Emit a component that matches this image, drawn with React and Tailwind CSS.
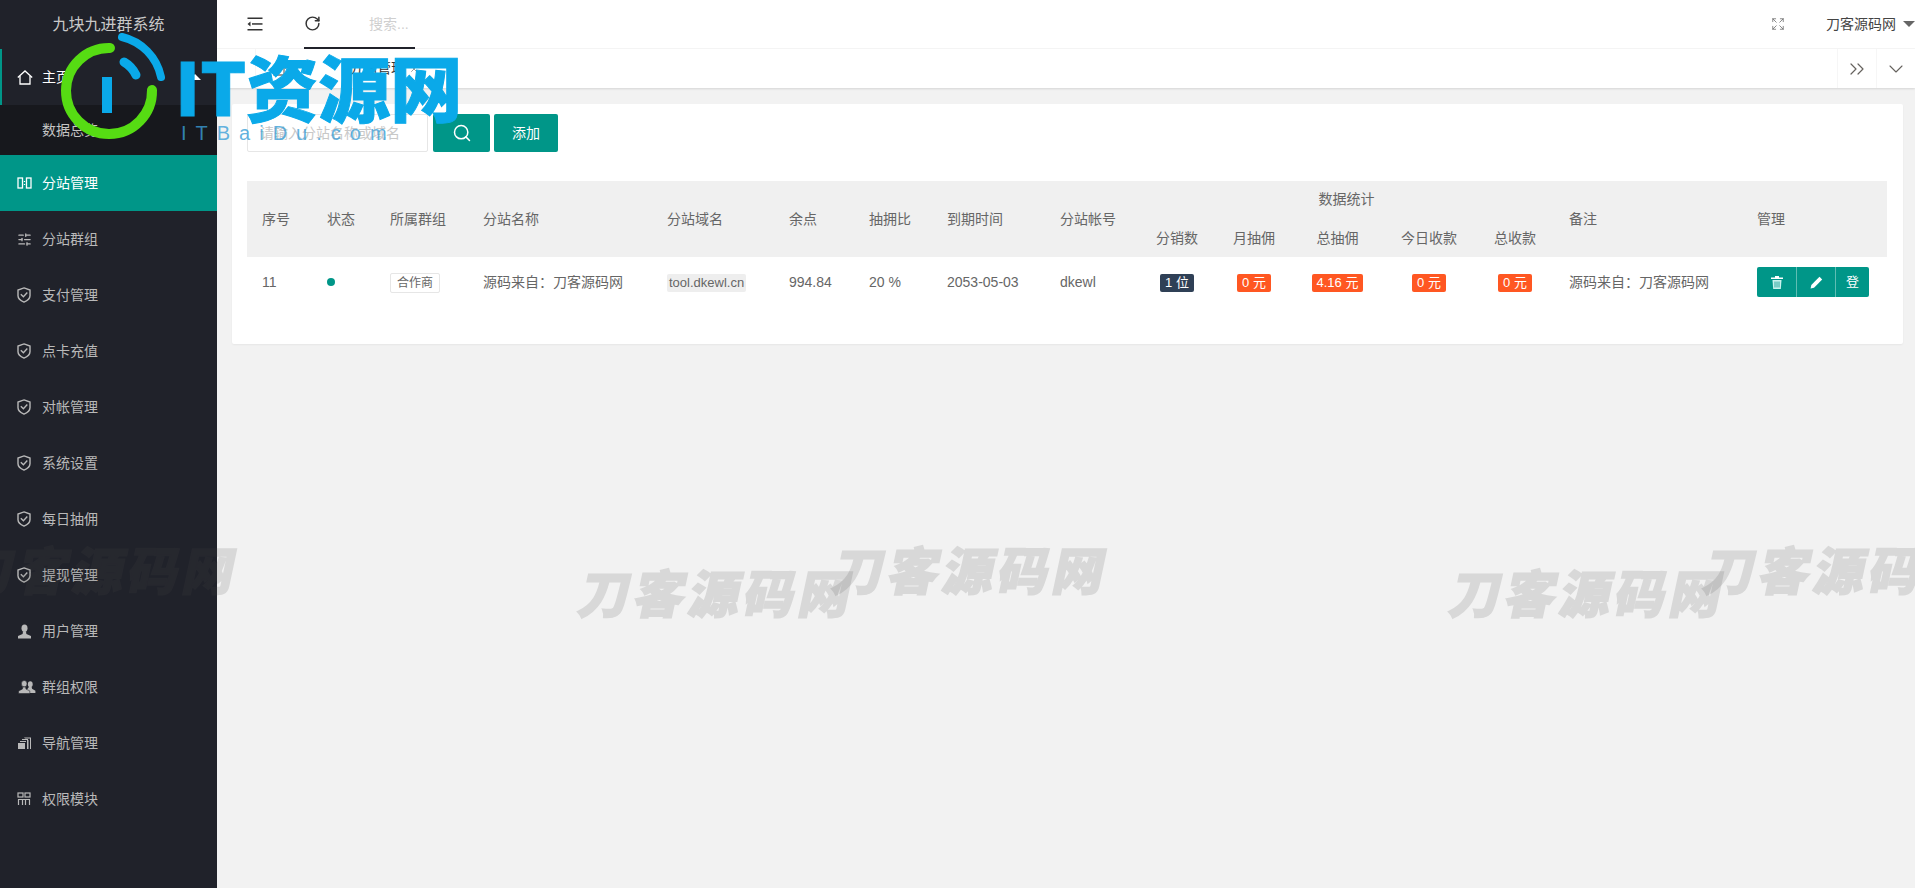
import React from "react";
import { SlidersHorizontal, RotateCw, Expand, ChevronsRight, ChevronsLeft, ChevronDown, Search, X } from "lucide-react";

const HomeIcon = ({ className = "" }) => (
  <svg className={`shrink-0 ${className}`} width="16" height="15" viewBox="0 0 16 15" fill="none" stroke="currentColor" strokeWidth="1.3">
    <path d="M0.800 7.500 8 1l7.200 6.500" />
    <path d="M3 6v8h10V6" />
  </svg>
);
const ShieldIcon = () => (
  <svg className="shrink-0" width="14" height="16" viewBox="0 0 14 16" fill="none" stroke="currentColor" strokeWidth="1.4">
    <path d="M7 0.900 13 3v5.800c0 3.200-2.800 5-6 6.300-3.200-1.300-6-3.100-6-6.300V3z" />
    <path d="M3.800 7.200 6.400 9.800 10.300 5.600" />
  </svg>
);
const ColumnsIcon = () => (
  <svg className="shrink-0" width="15" height="14" viewBox="0 0 15 14" fill="none" stroke="currentColor" strokeWidth="1.3">
    <rect x="1" y="2" width="4.500" height="10" />
    <rect x="9.500" y="2" width="4.500" height="10" />
    <path d="M7.500 5v1M7.500 8v1" />
  </svg>
);
const UserIcon = () => (
  <svg className="shrink-0" width="15" height="15" viewBox="0 0 15 15" fill="currentColor">
    <ellipse cx="7.500" cy="4.200" rx="3" ry="3.700" />
    <path d="M6 7.500h3l.4 2.400 4.600 2V14.500H1v-2.600l4.600-2z" />
  </svg>
);
const UsersIcon = () => (
  <svg className="ml-[1px] shrink-0" width="18" height="14" viewBox="0 0 19 15" fill="currentColor">
    <ellipse cx="13" cy="4.500" rx="2.600" ry="3.200" />
    <path d="M11.500 7.500h3l.4 2 3.600 2V14H9v-3z" />
    <ellipse cx="6.500" cy="4" rx="3" ry="3.500" stroke="#20222a" strokeWidth="0.600" />
    <path d="M5 7.500h3l.4 2.200 4.100 2V14.500H0.500v-2.800l4.100-2z" stroke="#20222a" strokeWidth="0.600" />
  </svg>
);
const NavIcon = () => (
  <svg className="shrink-0" width="15" height="14" viewBox="0 0 15 14" fill="currentColor">
    <path d="M1 7h7v6H1zM3 5h6v1H3zM5 3h6v1H5zM7 1.500h7V13h-1V2.500H8z" />
    <path d="M10 4h1.500v9H10z" />
  </svg>
);
const GridIcon = () => (
  <svg className="shrink-0" width="14" height="14" viewBox="0 0 14 14" fill="none" stroke="currentColor" strokeWidth="1.200">
    <rect x="1" y="1" width="5" height="4" />
    <rect x="8" y="1" width="5" height="4" />
    <path d="M1.500 7.500V13M5.500 7.500V13M8.500 7.500V13M12.500 7.500V13M1 7.500h12" />
  </svg>
);
const MenuFold = () => (
  <svg width="16" height="14" viewBox="0 0 16 14" fill="#333">
    <rect x="0.500" y="0.500" width="15" height="1.500" />
    <rect x="5" y="6.200" width="10.500" height="1.500" />
    <rect x="0.500" y="12" width="15" height="1.500" />
    <path d="M3.500 4.500v5L0.500 7z" />
  </svg>
);
const TrashIcon = () => (
  <svg width="14" height="15" viewBox="0 0 14 15" fill="none">
    <path d="M1 2.500h12v1.500H1zM5 1h4v1.500H5z" fill="#fff" />
    <path d="M2.500 5h9l-.7 9H3.200z" fill="#c9f2ee" />
    <path d="M5 6.500v6M7 6.500v6M9 6.500v6" stroke="#009688" strokeWidth="0.800" />
  </svg>
);
const PenIcon = () => (
  <svg width="13" height="13" viewBox="0 0 13 13" fill="#fff">
    <path d="M9.500 0.800l2.700 2.700L4 11.700.6 12.400l.7-3.400z" />
  </svg>
);

const menu = [
  ["分站群组", <SlidersHorizontal size={15} strokeWidth={2} className="shrink-0" />],
  ["支付管理", <ShieldIcon />],
  ["点卡充值", <ShieldIcon />],
  ["对帐管理", <ShieldIcon />],
  ["系统设置", <ShieldIcon />],
  ["每日抽佣", <ShieldIcon />],
  ["提现管理", <ShieldIcon />],
  ["用户管理", <UserIcon />],
  ["群组权限", <UsersIcon />],
  ["导航管理", <NavIcon />],
  ["权限模块", <GridIcon />],
];

const marks = [
  "left-[-35px] top-[532px]",
  "left-[581px] top-[555px]",
  "left-[835px] top-[532px]",
  "left-[1452px] top-[555px]",
  "left-[1706px] top-[532px]",
];

const Th = ({ children, className = "" }) => (
  <th rowSpan={2} className={`px-[15px] text-left font-normal align-middle ${className}`}>{children}</th>
);
const Badge = ({ children, dark }) => (
  <span className={`inline-block h-[18px] rounded-[2px] px-[5px] text-[13px] leading-[18px] text-white ${dark ? "bg-[#2f4056]" : "bg-[#ff5722]"}`}>
    {children}
  </span>
);

export default function App() {
  return (
    <div className="relative flex h-[888px] w-[1915px] overflow-hidden bg-[#f2f2f2] font-['Liberation_Sans','Noto_Sans_CJK_SC',sans-serif] text-[14px] text-[#666]">
      <aside className="flex w-[217px] shrink-0 flex-col bg-[#20222a] text-[#b9b9b9]">
        <div className="flex h-[49px] items-center justify-center text-[16px] text-[#c8c8c8]">九块九进群系统</div>
        <div className="flex h-[56px] items-center border-l-2 border-[#009688] pl-[15px] text-white">
          <HomeIcon className="mr-[9px]" />
          <span>主页</span>
          <span className="ml-auto mr-[16px] h-0 w-0 border-x-[6px] border-b-[6px] border-x-transparent border-b-white" />
        </div>
        <div className="flex h-[50px] items-center bg-[#17181d] pl-[42px] text-[#c4c4c4]">数据总览</div>
        <div className="flex h-[56px] items-center bg-[#009688] pl-[17px] text-white">
          <span className="mr-[10px] flex w-[15px] justify-center"><ColumnsIcon /></span>
          <span>分站管理</span>
        </div>
        {menu.map(([label, icon]) => (
          <div key={label} className="flex h-[56px] items-center pl-[17px]">
            <span className="mr-[10px] flex w-[15px]">{icon}</span>
            <span>{label}</span>
          </div>
        ))}
      </aside>

      <main className="flex min-w-0 flex-1 flex-col">
        <header className="flex h-[49px] items-center border-b border-[#f6f6f6] bg-white">
          <span className="ml-[30px] flex"><MenuFold /></span>
          <div className="relative ml-[41px] flex h-[49px] w-[111px] items-center border-b-2 border-[#20222a]">
            <RotateCw size={17} strokeWidth={2.1} className="text-[#333]" />
          </div>
          <span className="ml-[-46px] text-[#cfcfcf]">搜索...</span>
          <Expand size={14} strokeWidth={1.3} className="ml-auto mr-[41px] text-[#666]" />
          <span className="text-[#444]">刀客源码网</span>
          <span className="ml-[7px] h-0 w-0 border-x-[6px] border-t-[6px] border-x-transparent border-t-[#666]" />
        </header>
        <div className="flex h-[39px] items-center bg-white shadow-[0_1px_2px_rgba(0,0,0,0.12)]">
          <div className="flex h-full w-[39px] items-center justify-center border-r border-[#f6f6f6]">
            <ChevronsLeft size={18} strokeWidth={1.2} className="text-[#666]" />
          </div>
          <HomeIcon className="ml-[15px] text-[#777]" />
          <span className="ml-[62px] flex items-center text-[#333]">分站管理<X size={10} className="ml-1 text-[#888]" /></span>
          <div className="ml-auto flex h-full w-[40px] items-center justify-center border-x border-[#f6f6f6]">
            <ChevronsRight size={24} strokeWidth={1.2} className="text-[#66625e]" />
          </div>
          <div className="flex h-full w-[38px] items-center justify-center">
            <ChevronDown size={24} strokeWidth={1.1} className="text-[#66625e]" />
          </div>
        </div>

        <section className="ml-[15px] mr-[12px] mt-4 h-[240px] rounded-[2px] bg-white px-[15px] pt-[10px] shadow-[0_1px_2px_rgba(0,0,0,0.05)]">
          <div className="flex gap-[4px]">
            <div className="mr-[1px] flex h-[38px] w-[181px] items-center rounded-[2px] border border-[#e6e6e6] pl-[12px] text-[#c8c8c8]">请输入分站名称或域名</div>
            <button className="flex h-[38px] w-[57px] items-center justify-center rounded-[2px] bg-[#009688] text-white">
              <Search size={20} strokeWidth={1.8} />
            </button>
            <button className="h-[38px] w-[64px] rounded-[2px] bg-[#009688] text-white">添加</button>
          </div>
          <table className="mt-[29px] w-[1640px] table-fixed border-collapse">
            <colgroup>
              <col className="w-[65px]" /><col className="w-[63px]" /><col className="w-[93px]" /><col className="w-[184px]" />
              <col className="w-[122px]" /><col className="w-[80px]" /><col className="w-[78px]" /><col className="w-[113px]" />
              <col className="w-[94px]" /><col className="w-[76px]" /><col className="w-[78px]" /><col className="w-[89px]" />
              <col className="w-[94px]" /><col className="w-[78px]" /><col className="w-[188px]" /><col className="w-[145px]" />
            </colgroup>
            <thead className="bg-[#f0f0f0]">
              <tr className="h-[38px]">
                <Th>序号</Th><Th>状态</Th><Th>所属群组</Th><Th>分站名称</Th><Th>分站域名</Th>
                <Th>余点</Th><Th>抽拥比</Th><Th>到期时间</Th><Th>分站帐号</Th>
                <th colSpan={5} className="pb-[2px] text-center font-normal">数据统计</th>
                <Th>备注</Th><Th>管理</Th>
              </tr>
              <tr className="h-[38px]">
                {["分销数", "月抽佣", "总抽佣", "今日收款", "总收款"].map((t) => (
                  <th key={t} className="text-center font-normal">{t}</th>
                ))}
              </tr>
            </thead>
            <tbody>
              <tr className="h-[50px]">
                <td className="px-[15px]">11</td>
                <td className="px-[15px]"><span className="block h-[8px] w-[8px] rounded-full bg-[#009688]" /></td>
                <td className="px-[15px]">
                  <span className="inline-block h-[20px] w-[50px] rounded-[2px] border border-[#e6e6e6] text-center text-[12px] leading-[18px]">合作商</span>
                </td>
                <td className="px-[15px]">源码来自：刀客源码网</td>
                <td className="px-[15px]">
                  <span className="inline-block h-[18px] whitespace-nowrap rounded-[2px] bg-[#eeeeee] px-[2px] text-[13px] leading-[18px]">tool.dkewl.cn</span>
                </td>
                <td className="px-[15px]">994.84</td>
                <td className="px-[15px]">20 %</td>
                <td className="whitespace-nowrap px-[15px]">2053-05-03</td>
                <td className="px-[15px]">dkewl</td>
                <td className="text-center"><Badge dark>1 位</Badge></td>
                <td className="text-center"><Badge>0 元</Badge></td>
                <td className="text-center"><Badge>4.16 元</Badge></td>
                <td className="text-center"><Badge>0 元</Badge></td>
                <td className="text-center"><Badge>0 元</Badge></td>
                <td className="px-[15px]">源码来自：刀客源码网</td>
                <td className="px-[15px]">
                  <div className="flex h-[30px] w-[112px] overflow-hidden rounded-[2px] bg-[#009688] text-[13px] text-white">
                    <span className="flex w-[39px] items-center justify-center"><TrashIcon /></span>
                    <span className="flex w-[40px] items-center justify-center border-x border-[#5fbdb3]"><PenIcon /></span>
                    <span className="flex flex-1 items-center justify-center">登</span>
                  </div>
                </td>
              </tr>
            </tbody>
          </table>
        </section>
      </main>

      {/* Faint watermarks lying over the whole page */}
      {marks.map((m) => (
        <div
          key={m}
          className={`pointer-events-none absolute ${m} -skew-x-12 whitespace-nowrap font-['Noto_Sans_CJK_SC',sans-serif] text-[51px] font-black leading-[72px] tracking-[4px] text-[#4a4a4a] opacity-15 [-webkit-text-stroke:1.500px_#4a4a4a]`}
        >
          刀客源码网
        </div>
      ))}

      {/* Logo stamp lying over the top-left corner */}
      <svg className="pointer-events-none absolute left-0 top-0" width="180" height="140" viewBox="0 0 180 140" fill="none">
        <path d="M110 48 A 43 43 0 1 0 152 90" stroke="#56dc13" strokeWidth="10" strokeLinecap="round" />
        <path d="M122 37 A 52 52 0 0 1 161 77" stroke="#0aa9e9" strokeWidth="8" strokeLinecap="round" />
        <path d="M124 62 A 30 30 0 0 1 136 75" stroke="#0aa9e9" strokeWidth="9" strokeLinecap="round" />
        <rect x="102" y="77" width="10" height="36" fill="#0aa9e9" />
      </svg>
      <div className="pointer-events-none absolute left-[175px] top-[37px] whitespace-nowrap font-['Noto_Sans_CJK_SC',sans-serif] text-[72px] font-black leading-[96px] text-[#0aa9e9] [-webkit-text-stroke:1px_#0aa9e9]">
        IT资源网
      </div>
      <div className="pointer-events-none absolute left-[181px] top-[120px] whitespace-nowrap font-['Liberation_Sans',sans-serif] text-[20px] leading-[26px] tracking-[9px] text-[#3a9fd8]/80">
        ITBaiDu.com
      </div>
    </div>
  );
}
